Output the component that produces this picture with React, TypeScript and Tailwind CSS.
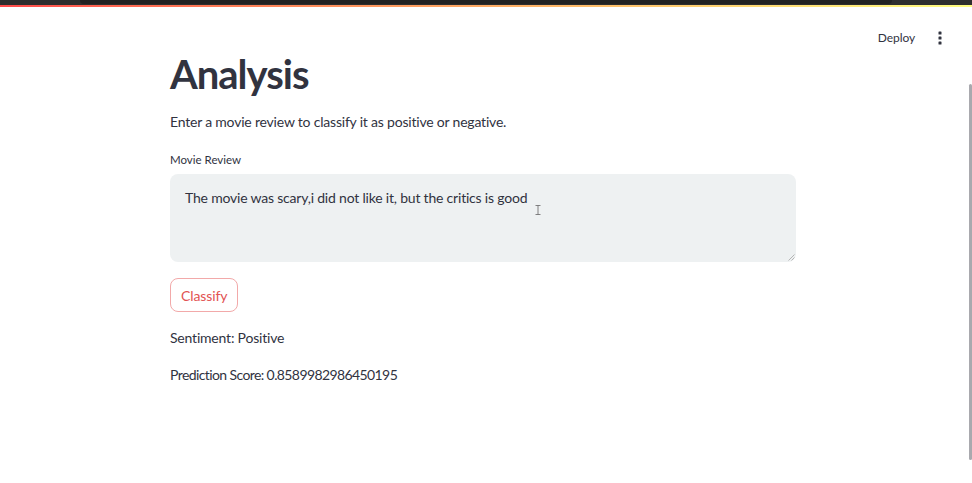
import React from 'react';

const font = { fontFamily: '"Source Sans Pro", Lato, "Noto Sans", sans-serif' };

function KebabIcon() {
  return (
    <svg width="4" height="14" viewBox="0 0 4 14" className="fill-[#31333f]">
      <rect x="0.5" y="0.5" width="3" height="3" rx="0.6" />
      <rect x="0.5" y="5.5" width="3" height="3" rx="0.6" />
      <rect x="0.5" y="10.5" width="3" height="3" rx="0.6" />
    </svg>
  );
}

export default function App() {
  return (
    <div
      className="relative h-[483px] w-full overflow-hidden bg-white text-[#31333f]"
      style={font}
    >
      {/* top strip */}
      <div className="h-[5px] w-full bg-[#2e2e2e]">
        <div className="mx-[80px] h-[4px] rounded-b-md bg-[#222222]" />
      </div>
      <div className="h-[2px] w-full bg-gradient-to-r from-[#ff4b4b] to-[#fffd80]" />

      {/* header overlay */}
      <div className="absolute right-[30px] top-[29px] flex items-center gap-[23px]">
        <span className="text-[12px] tracking-[-0.1px] text-[#31333f]">Deploy</span>
        <KebabIcon />
      </div>

      {/* scrollbar */}
      <div className="absolute right-0 top-[84px] h-[376px] w-[3px] rounded-full bg-[#a9a9ae]" />

      <div className="pr-[6px]">
        <div className="mx-auto flex w-[626px] flex-col">
          <h1 className="mt-[39px] text-[40px] font-bold leading-[56px] tracking-[-1px] text-[#31333f]">
            Analysis
          </h1>
          <p className="mt-[8px] text-[14px] leading-[24px] tracking-[-0.2px]">
            Enter a movie review to classify it as positive or negative.
          </p>
          <label className="mt-[16px] text-[11.5px] leading-[20px]">Movie Review</label>
          <div className="relative mt-[4px] h-[88px] rounded-lg bg-[#eef1f2] px-[15px] pt-[11px]">
            <span className="text-[14px] leading-[24px] tracking-[-0.2px]">
              The movie was scary,i did not like it, but the critics is good
            </span>
            <svg
              className="absolute left-[365px] top-[31px]"
              width="6"
              height="10"
              viewBox="0 0 6 10"
              fill="none"
              stroke="#666"
              strokeWidth="0.8"
            >
              <path d="M0.5 0.5h5M3 0.5v9M0.5 9.5h5" />
            </svg>
            <svg
              className="absolute bottom-[1px] right-[1px]"
              width="7"
              height="7"
              viewBox="0 0 7 7"
              stroke="#b5b5b5"
              strokeWidth="1"
            >
              <path d="M6.5 0.5l-6 6M6.5 3.5l-3 3" />
            </svg>
          </div>
          <div className="mt-[16px]">
            <button className="h-[34px] rounded-lg border border-[#f2a9a9] bg-white px-[10px] text-[14px] tracking-[-0.1px] text-[#e25252]">
              Classify
            </button>
          </div>
          <p className="mt-[14px] text-[14px] leading-[24px] tracking-[-0.2px]">
            Sentiment: Positive
          </p>
          <p className="mt-[13px] text-[14px] leading-[24px] tracking-[-0.6px]">
            Prediction Score: 0.8589982986450195
          </p>
        </div>
      </div>
    </div>
  );
}
